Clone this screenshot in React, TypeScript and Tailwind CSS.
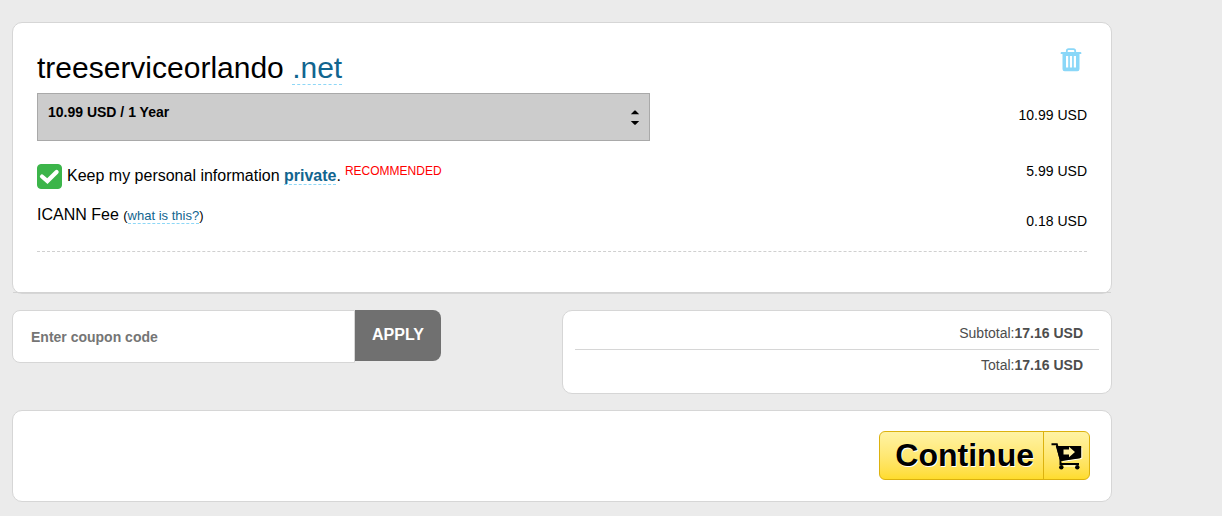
import React from "react";

const card = "rounded-[10px] border border-[#d6d6d6] bg-white";
const dashedLink = "border-b border-dashed border-[#8dd7f7] text-[#11658f]";

function TrashIcon() {
  return (
    <svg width="22" height="24" viewBox="0 0 22 24" fill="none" aria-hidden="true">
      <path d="M6.800 4.500V3a1.800 1.800 0 0 1 1.800-1.800h4.800A1.800 1.800 0 0 1 15.200 3v1.500" stroke="#8ad7f8" strokeWidth="1.800" />
      <path d="M1.500 4h19a.8.8 0 0 1 .8.8v1.300H.7V4.800a.8.8 0 0 1 .8-.8Z" fill="#8ad7f8" />
      <path
        fillRule="evenodd"
        d="M2.500 6h17v15a2.200 2.200 0 0 1-2.200 2.200H4.700A2.200 2.200 0 0 1 2.500 21ZM6 8v11.500h2.200V8ZM9.900 8v11.500h2.200V8ZM13.800 8v11.500H16V8Z"
        fill="#8ad7f8"
      />
    </svg>
  );
}

function CartIcon() {
  return (
    <svg width="32" height="28" viewBox="0 0 32 28" aria-hidden="true">
      <path d="M12 19.300 30.800 16.500V6M13 24h14" fill="none" stroke="#fff" strokeWidth="1" />
      <path d="M.5 2.200h5.300L9.500 17v5M9 18.200l20-3M8.500 22h19.500" fill="none" stroke="#000" strokeWidth="2" />
      <path d="M4.800 4H30.200V15.800L9 18.800Z" fill="#000" />
      <circle cx="10.300" cy="25.200" r="2.200" />
      <circle cx="26.300" cy="25.200" r="2.200" />
      <path d="M12.500 7.500h5.500V4.800l6 5.200-6 5.200v-2.700h-5.500Z" fill="#fff0a0" />
    </svg>
  );
}

export default function App() {
  return (
    <div className="min-h-screen bg-[#ebebeb] font-['Liberation_Sans',Arial,sans-serif] text-black">
      <main className="max-w-[1112px] pt-[22px] pb-[14px] pl-3">
        <section className={`${card} px-6 pt-[25px] pb-[41px]`}>
          <div className="flex h-10 items-start justify-between">
            <h1 className="text-[30px] leading-10">
              treeserviceorlando <a href="#domain" className={dashedLink}>.net</a>
            </h1>
            <button type="button" aria-label="Remove domain" className="mr-[5px]">
              <TrashIcon />
            </button>
          </div>

          <div className="mt-[5px] flex items-center justify-between">
            <div className="relative w-7/12">
              <select
                aria-label="Registration period"
                className="block h-12 w-full appearance-none border border-[#a9a9a9] bg-[#ccc] px-[10px] pb-[10px] text-sm font-bold"
              >
                <option>10.99 USD / 1 Year</option>
              </select>
              <svg className="pointer-events-none absolute top-4 right-[10px]" width="10" height="16" viewBox="0 0 10 16" aria-hidden="true">
                <path d="M.8 5.200 4.500 1.400h1l3.700 3.800ZM.8 12l3.700 3.800h1L9.200 12Z" />
              </svg>
            </div>
            <span className="pb-1 text-sm">10.99 USD</span>
          </div>

          <div className="mt-[23px] flex items-start justify-between">
            <div className="flex items-start">
              <span className="relative mr-[5px] block h-[25px] w-[25px]">
                <input
                  id="privacy"
                  type="checkbox"
                  defaultChecked
                  className="peer block h-[25px] w-[25px] appearance-none rounded border border-[#3cb54a] checked:bg-[#3cb54a]"
                />
                <svg className="pointer-events-none absolute inset-0 hidden peer-checked:block" width="25" height="25" viewBox="0 0 25 25" aria-hidden="true">
                  <path d="m5 12.500 5.400 4.600L19.600 8" fill="none" stroke="#fff" strokeWidth="4.200" strokeLinecap="round" />
                </svg>
              </span>
              <label htmlFor="privacy" className="leading-[23px]">
                Keep my personal information{" "}
                <a href="#private" className={`${dashedLink} font-bold`}>private</a>.
              </label>
              <span className="ml-1 text-xs leading-[14px] text-[#f00]">RECOMMENDED</span>
            </div>
            <span className="text-sm leading-[14px]">5.99 USD</span>
          </div>

          <div className="mt-[14px] flex h-[49px] items-start justify-between border-b border-dashed border-[#d0d0d0]">
            <div className="leading-[23px]">
              ICANN Fee{" "}
              <span className="text-[13px]">
                (<a href="#icann" className={dashedLink}>what is this?</a>)
              </span>
            </div>
            <span className="mt-2 text-sm">0.18 USD</span>
          </div>
        </section>
        <hr className="mx-px -mt-[2px] border-[#d3d3d3]" />

        <div className="mt-[17px] flex items-start justify-between">
          <form className="flex items-start" onSubmit={(e) => e.preventDefault()}>
            <input
              type="text"
              aria-label="Coupon code"
              placeholder="Enter coupon code"
              className="h-[53px] w-[343px] rounded-l-lg border border-[#d6d6d6] bg-white px-[18px] text-sm font-bold placeholder:text-[#757575]"
            />
            <button type="submit" className="h-[51px] w-[86px] rounded-r-lg bg-[#707070] pb-px font-bold text-white">
              APPLY
            </button>
          </form>

          <dl className={`${card} w-1/2 px-3 pt-[6px] pb-[14px] text-sm text-[#4d4d4d]`}>
            <div className="flex h-[33px] items-center justify-end border-b border-[#d6d6d6] pr-4">
              <dt>Subtotal:</dt>
              <dd className="font-bold">17.16 USD</dd>
            </div>
            <div className="flex h-[29px] items-center justify-end pr-4">
              <dt>Total:</dt>
              <dd className="font-bold">17.16 USD</dd>
            </div>
          </dl>
        </div>

        <section className={`${card} mt-4 flex justify-end pt-5 pr-[21px] pb-[21px]`}>
          <button
            type="button"
            className="flex h-[49px] items-stretch overflow-hidden rounded-md border border-[#dcb20e] bg-linear-to-b from-[#fff3a3] to-[#ffdc2b] text-[32px] leading-[47px] font-bold text-shadow-[1px_1px_0_#fff]"
          >
            <span className="pr-[9px] pl-[15px]">Continue</span>
            <span className="flex items-center border-l border-[#dcb20e] pr-[6px] pl-[7px]">
              <CartIcon />
            </span>
          </button>
        </section>
      </main>
    </div>
  );
}
